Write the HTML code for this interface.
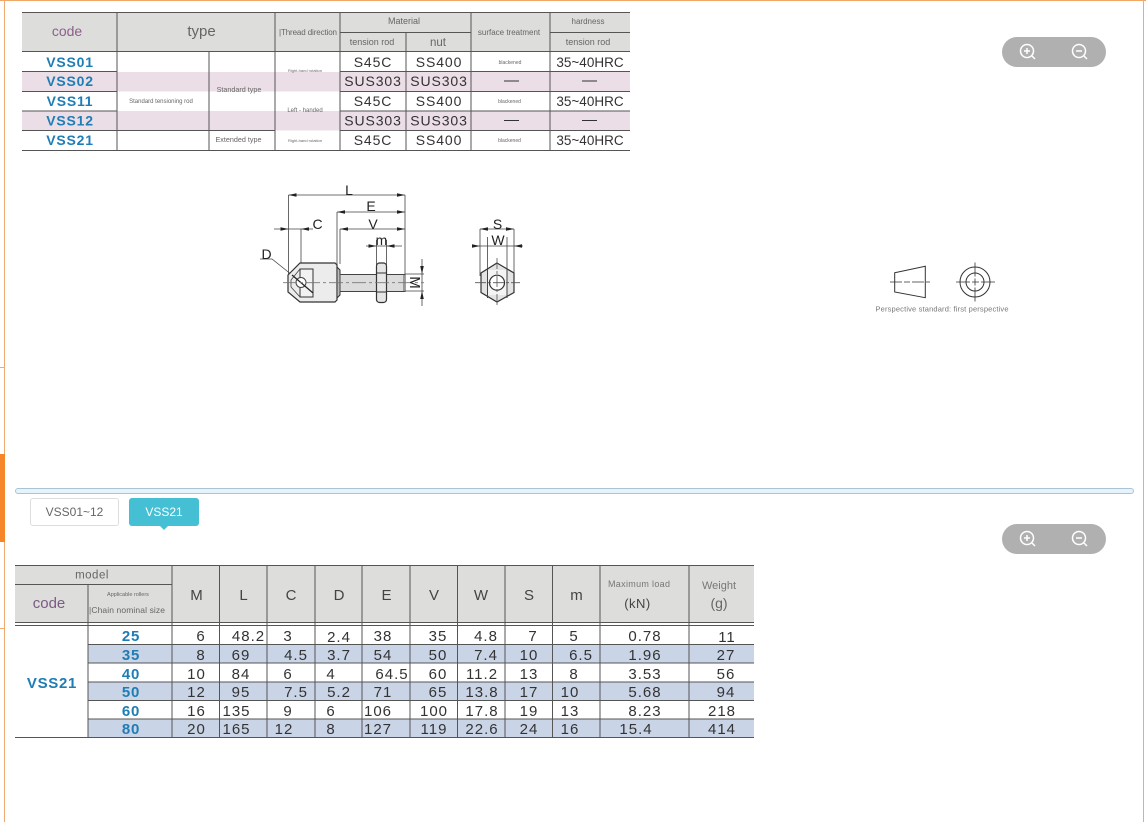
<!DOCTYPE html>
<html><head><meta charset="utf-8"><title>VSS</title>
<style>
html,body{margin:0;padding:0;background:#fff;width:1146px;height:822px;overflow:hidden}
svg{display:block;font-family:"Liberation Sans",sans-serif;filter:blur(.3px)}
.b{font-weight:700;fill:#1f7db5;font-size:14px;letter-spacing:.8px;text-anchor:middle}
.n{fill:#333;font-size:14px;letter-spacing:.9px;text-anchor:middle}
.r{fill:#333;font-size:13.5px;text-anchor:middle}
.v{fill:#333;font-size:15px;letter-spacing:1px;text-anchor:middle}
.h{fill:#444;font-size:15px;text-anchor:middle}
.g{fill:#666;text-anchor:middle}
.d{fill:#222;font-size:14px;text-anchor:middle}
</style></head><body>
<svg width="1146" height="822" viewBox="0 0 1146 822" xmlns="http://www.w3.org/2000/svg">
<!-- frame -->
<rect x="0" y="0" width="1146" height="1" fill="#f0a868"/>
<rect x="4" y="0" width="1" height="822" fill="#eeaa70"/>
<rect x="1143" y="0" width="1" height="822" fill="#eeaa70"/>
<rect x="0" y="367" width="5" height="1" fill="#eeaa70"/>
<rect x="0" y="628" width="5" height="1" fill="#eeaa70"/>
<rect x="0" y="454" width="5" height="88" fill="#f5862a"/>

<!-- top table -->
<rect x="22" y="12" width="608" height="40" fill="#dddddb"/>
<rect x="22" y="72" width="608" height="19.500" fill="#ebdee6"/>
<rect x="22" y="111" width="608" height="19.500" fill="#ebdee6"/>
<g stroke="#555" stroke-width="1" fill="none">
<path d="M22 12.500H630M22 51.500H630M340 32.500H471M550 32.500H630M22 71.500H117M340 71.500H630M22 91.500H117M340 91.500H630M22 111H117M340 111H630M22 130.500H117M340 130.500H630M22 150.500H630M117 130.500H275"/>
<path d="M117 12V151M209 52V151M275 12V151M340 12V151M406 32V151M471 12V151M550 12V151"/>
</g>
<g>
<text x="67" y="36" font-size="14" fill="#8c5f8a" text-anchor="middle">code</text>
<text x="201.500" y="36" font-size="15" fill="#666" text-anchor="middle">type</text>
<text x="279" y="35" font-size="8" fill="#666" textLength="58">|Thread direction</text>
<text class="g" x="404" y="24" font-size="9">Material</text>
<text class="g" x="372" y="45" font-size="9">tension rod</text>
<text class="g" x="438" y="46" font-size="11.500">nut</text>
<text class="g" x="509" y="35" font-size="8">surface treatment</text>
<text class="g" x="588" y="24" font-size="8">hardness</text>
<text class="g" x="588" y="45" font-size="9">tension rod</text>
<text class="b" x="70" y="67">VSS01</text>
<text class="b" x="70" y="86">VSS02</text>
<text class="b" x="70" y="106">VSS11</text>
<text class="b" x="70" y="125.500">VSS12</text>
<text class="b" x="70" y="145">VSS21</text>
<text class="g" x="161" y="103" font-size="6">Standard tensioning rod</text>
<text class="g" x="239" y="92" font-size="7.200">Standard type</text>
<text class="g" x="238.500" y="142" font-size="7.200">Extended type</text>
<text class="g" x="305" y="72" font-size="4">Right-hand rotation</text>
<text class="g" x="305" y="112" font-size="6">Left - handed</text>
<text class="g" x="305" y="142" font-size="4">Right-hand rotation</text>
<text class="n" x="373" y="67">S45C</text><text class="n" x="439" y="67">SS400</text>
<text class="n" x="373" y="86">SUS303</text><text class="n" x="439" y="86">SUS303</text>
<text class="n" x="373" y="106">S45C</text><text class="n" x="439" y="106">SS400</text>
<text class="n" x="373" y="125.500">SUS303</text><text class="n" x="439" y="125.500">SUS303</text>
<text class="n" x="373" y="145">S45C</text><text class="n" x="439" y="145">SS400</text>
<text class="g" x="510" y="64" font-size="5">blackened</text>
<text class="g" x="509.500" y="103" font-size="5">blackened</text>
<text class="g" x="509.500" y="142" font-size="5">blackened</text>
<text class="r" x="590" y="67">35~40HRC</text>
<text class="r" x="590" y="106">35~40HRC</text>
<text class="r" x="590" y="145">35~40HRC</text>
</g>
<path d="M504 81H519M582 81H597M504 120.500H519M582 120.500H597" stroke="#333" stroke-width="1"/>

<!-- zoom pills -->
<rect x="1002" y="37" width="104" height="30" rx="15" fill="#b0b0b0"/>
<g fill="none" stroke="#fff" stroke-width="1.500">
<circle cx="1027" cy="51" r="6.500"/><path d="M1032 56L1035 59M1024 51H1030M1027 48V54"/>
<circle cx="1079" cy="51" r="6.500"/><path d="M1084 56L1087 59M1076 51H1082"/>
</g>
<rect x="1002" y="524" width="104" height="30" rx="15" fill="#b0b0b0"/>
<g fill="none" stroke="#fff" stroke-width="1.500">
<circle cx="1027" cy="538" r="6.500"/><path d="M1032 543L1035 546M1024 538H1030M1027 535V541"/>
<circle cx="1079" cy="538" r="6.500"/><path d="M1084 543L1087 546M1076 538H1082"/>
</g>

<!-- drawing -->
<g fill="none" stroke="#444" stroke-width=".8">
<path d="M288.500 195V286M405 195V276M337 212V266M340 229V264M301 229V264M274 229H313M340 229H405M337 212H405M288.500 195H405M366 246H402M376.500 240V265M386.500 240V265M405 274H424M405 291H424M422 259V306M260 259H272L292 275"/>
<path d="M480 229H514M480 229V276M514 229V276M472 246H523M487.500 237V295M507 237V295" />
</g>
<path d="M288 275L300 263H335L337 265V300L335 302H300L288 292Z" fill="#ececec" stroke="#333" stroke-width="1.200"/>
<path d="M337 267L340 270V295L337 298Z" fill="#bbb" stroke="#333"/>
<rect x="340" y="274.500" width="65" height="17" fill="#dcdcdc" stroke="#444" stroke-width="1"/>
<rect x="403" y="275" width="2" height="16" fill="#999"/>
<path d="M300 269H313V297H300Z" fill="#f2f2f2" stroke="#333" stroke-width="1"/>
<path d="M300 269L291 280V287L300 297" fill="none" stroke="#444" stroke-width=".8"/>
<circle cx="301" cy="282.500" r="5" fill="#fff" stroke="#444"/>
<path d="M292 275L313 293" stroke="#222" stroke-width="1.200"/>
<rect x="376.500" y="263" width="10" height="39.500" rx="3" fill="#e6e6e6" stroke="#333" stroke-width="1.200"/>
<path d="M376.500 273H386.500M376.500 292H386.500" stroke="#333"/>
<path d="M283 282.700H424" stroke="#777" stroke-width=".8" stroke-dasharray="14 3 3 3"/>
<path d="M497 263L514 273V292.500L497 302L481 292.500V273Z" fill="#e4e4e4" stroke="#333" stroke-width="1.200"/>
<rect x="488" y="270" width="18.500" height="25" fill="#f4f4f4"/>
<path d="M487.500 269V298M507 269V298" stroke="#444"/>
<circle cx="497" cy="282.700" r="7.500" fill="#fff" stroke="#333" stroke-width="1.200"/>
<path d="M475 282.700H520M497 258V307" stroke="#555" stroke-width=".8" stroke-dasharray="11 2 3 2"/>
<g fill="#222">
<path d="M288.500 195l8-1.800v3.600zM405 195l-8-1.800v3.600zM337 212l8-1.800v3.600zM405 212l-8-1.800v3.600zM340 229l8-1.800v3.600zM405 229l-8-1.800v3.600zM288.500 229l-8-1.800v3.600zM301 229l8-1.800v3.600zM376.500 246l-8-1.800v3.600zM386.500 246l8-1.800v3.600zM422 274l-1.800-8h3.600zM422 291l-1.800 8h3.600zM480 229l8-1.800v3.600zM514 229l-8-1.800v3.600zM480 246l-8-1.800v3.600zM514 246l8-1.800v3.600z"/>
</g>
<text class="d" x="349" y="195">L</text>
<text class="d" x="371" y="211">E</text>
<text class="d" x="373" y="229">V</text>
<text class="d" x="381.500" y="245">m</text>
<text class="d" x="317.500" y="229">C</text>
<text class="d" x="266.500" y="259">D</text>
<text class="d" style="font-size:15px" x="0" y="0" transform="translate(410,282.500) rotate(90)">M</text>
<text class="d" x="497.500" y="229">S</text>
<text class="d" x="498" y="245">W</text>

<!-- perspective -->
<g fill="none" stroke="#333" stroke-width="1">
<path d="M894.700 272.700L925.300 266.300V297.700L894.700 292Z"/>
<path d="M890 282H930" stroke-dasharray="12 2 6 2" stroke-width=".8"/>
<circle cx="975" cy="282" r="15"/><circle cx="975" cy="282" r="9"/>
<path d="M956 282H995M975 262.500V301.500" stroke-width=".8" stroke-dasharray="14 2 7 2"/>
</g>
<text x="875.500" y="311.500" font-size="7.500" fill="#777" textLength="133">Perspective standard: first perspective</text>

<!-- progress -->
<rect x="15.500" y="488.500" width="1118" height="5" rx="2.500" fill="#e6f3fb" stroke="#a9c4d6"/>

<!-- tabs -->
<rect x="30.500" y="498.500" width="88" height="27" rx="2.500" fill="#fff" stroke="#ddd"/>
<text x="74.500" y="516" font-size="12" fill="#666" text-anchor="middle">VSS01~12</text>
<rect x="129" y="498" width="70" height="28" rx="3" fill="#45bfd4"/>
<path d="M160 526H168L164 530Z" fill="#45bfd4"/>
<text x="164" y="516" font-size="12" fill="#fff" text-anchor="middle">VSS21</text>

<!-- bottom table -->
<rect x="15" y="565" width="739" height="57" fill="#dddddb"/>
<rect x="88" y="644" width="666" height="19" fill="#c9d4e6"/>
<rect x="88" y="682" width="666" height="18.500" fill="#c9d4e6"/>
<rect x="88" y="719" width="666" height="18.500" fill="#c9d4e6"/>
<g stroke="#555" stroke-width="1" fill="none">
<path d="M15 565.500H754M15 584.500H172M15 622.500H754M15 625.500H754M88 644.500H754M88 663H754M88 682H754M88 700.500H754M88 719H754M15 737.500H754"/>
<path d="M88 584V738M172 565V738M219.500 565V738M267 565V738M315 565V738M362 565V738M410 565V738M457.500 565V738M505 565V738M552.500 565V738M600 565V738M689 565V738"/>
</g>
<text class="g" x="92" y="578.500" font-size="11.500" style="letter-spacing:.5px">model</text>
<text x="49" y="608" font-size="15" fill="#7b5a85" text-anchor="middle">code</text>
<text class="g" x="128" y="596" font-size="5.500">Applicable rollers</text>
<text x="89" y="613" font-size="8.500" fill="#666" textLength="76">|Chain nominal size</text>
<text class="h" x="196.500" y="600">M</text>
<text class="h" x="243.500" y="600">L</text>
<text class="h" x="291" y="600">C</text>
<text class="h" x="339" y="600">D</text>
<text class="h" x="386.500" y="600">E</text>
<text class="h" x="434" y="600">V</text>
<text class="h" x="481" y="600">W</text>
<text class="h" x="529" y="600">S</text>
<text class="h" x="576.500" y="600">m</text>
<text x="608" y="587" font-size="9" fill="#777" textLength="62">Maximum load</text>
<text class="h" x="637.500" y="608" style="font-size:13px;letter-spacing:.5px">(kN)</text>
<text x="719" y="589" font-size="11" fill="#777" text-anchor="middle">Weight</text>
<text class="h" x="719" y="608" style="font-size:14px;fill:#666">(g)</text>

<text class="b" x="52" y="688" style="font-size:15px;letter-spacing:.7px">VSS21</text>
<text class="b" x="131" y="641" style="font-size:15px">25</text>
<text class="b" x="131" y="660" style="font-size:15px">35</text>
<text class="b" x="131" y="679" style="font-size:15px">40</text>
<text class="b" x="131" y="697" style="font-size:15px">50</text>
<text class="b" x="131" y="716" style="font-size:15px">60</text>
<text class="b" x="131" y="734" style="font-size:15px">80</text>
<!-- row 1 -->
<text class="v" x="201" y="641">6</text><text class="v" x="248.500" y="641">48.2</text><text class="v" x="288" y="641">3</text><text class="v" x="339" y="642">2.4</text><text class="v" x="383" y="641">38</text><text class="v" x="438" y="641">35</text><text class="v" x="486" y="641">4.8</text><text class="v" x="533" y="641">7</text><text class="v" x="574" y="641">5</text><text class="v" x="645" y="641">0.78</text><text class="v" x="727" y="642">11</text>
<!-- row 2 -->
<text class="v" x="201" y="660">8</text><text class="v" x="241" y="660">69</text><text class="v" x="296" y="660">4.5</text><text class="v" x="339" y="660">3.7</text><text class="v" x="383" y="660">54</text><text class="v" x="438" y="660">50</text><text class="v" x="486" y="660">7.4</text><text class="v" x="529" y="660">10</text><text class="v" x="581" y="660">6.5</text><text class="v" x="645" y="660">1.96</text><text class="v" x="726" y="660">27</text>
<!-- row 3 -->
<text class="v" x="196.500" y="679">10</text><text class="v" x="241" y="679">84</text><text class="v" x="288" y="679">6</text><text class="v" x="331" y="679">4</text><text class="v" x="392" y="679">64.5</text><text class="v" x="438" y="679">60</text><text class="v" x="482" y="679">11.2</text><text class="v" x="529" y="679">13</text><text class="v" x="574" y="679">8</text><text class="v" x="645" y="679">3.53</text><text class="v" x="726" y="679">56</text>
<!-- row 4 -->
<text class="v" x="196.500" y="697">12</text><text class="v" x="241" y="697">95</text><text class="v" x="296" y="697">7.5</text><text class="v" x="339" y="697">5.2</text><text class="v" x="383" y="697">71</text><text class="v" x="438" y="697">65</text><text class="v" x="482" y="697">13.8</text><text class="v" x="529" y="697">17</text><text class="v" x="570" y="697">10</text><text class="v" x="645" y="697">5.68</text><text class="v" x="726" y="697">94</text>
<!-- row 5 -->
<text class="v" x="196.500" y="716">16</text><text class="v" x="236.500" y="716">135</text><text class="v" x="288" y="716">9</text><text class="v" x="331" y="716">6</text><text class="v" x="378" y="716">106</text><text class="v" x="434" y="716">100</text><text class="v" x="482" y="716">17.8</text><text class="v" x="529" y="716">19</text><text class="v" x="570" y="716">13</text><text class="v" x="645" y="716">8.23</text><text class="v" x="722" y="716">218</text>
<!-- row 6 -->
<text class="v" x="196.500" y="734">20</text><text class="v" x="236.500" y="734">165</text><text class="v" x="284" y="734">12</text><text class="v" x="331" y="734">8</text><text class="v" x="378" y="734">127</text><text class="v" x="434" y="734">119</text><text class="v" x="482" y="734">22.6</text><text class="v" x="529" y="734">24</text><text class="v" x="570" y="734">16</text><text class="v" x="636" y="734">15.4</text><text class="v" x="722" y="734">414</text>
</svg>
</body></html>
